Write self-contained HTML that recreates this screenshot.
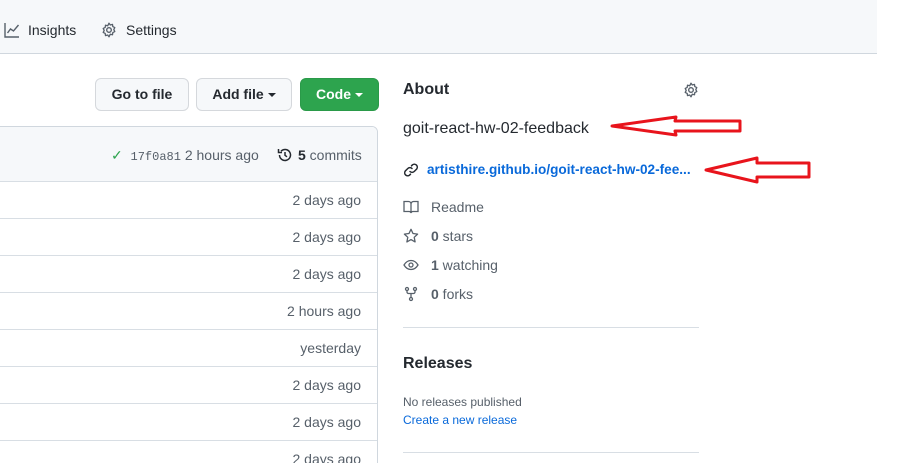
<!DOCTYPE html>
<html><head><meta charset="utf-8"><style>
html,body{margin:0;width:913px;height:463px;overflow:hidden}
body{background:#fff;font-family:"Liberation Sans",sans-serif;color:#24292f;position:relative}
.a{position:absolute;white-space:nowrap}
.hdr{position:absolute;left:0;top:0;width:877px;height:53px;background:#f6f8fa;border-bottom:1px solid #d0d7de}
.btn{position:absolute;top:78px;height:31px;border:1px solid #d5d8dc;border-radius:6px;background:#f6f8fa;font-size:14px;font-weight:bold;line-height:31px;text-align:center;color:#24292f}
.caret{display:inline-block;border-left:4px solid transparent;border-right:4px solid transparent;border-top:4px solid currentColor;vertical-align:middle;margin-left:4px}
.tbl{position:absolute;left:-10px;top:126px;width:386px;height:350px;border:1px solid #d0d7de;border-radius:6px;overflow:hidden}
.row{position:absolute;left:0;width:386px;height:37px;border-top:1px solid #d8dee4}
.row span{position:absolute;right:16px;top:10px;font-size:14px;color:#57606a}
.side{font-size:14px;color:#57606a}
svg{position:absolute}
</style></head><body>
<div class="hdr"></div>
<svg style="left:4px;top:22px" width="16" height="16" viewBox="0 0 16 16"><path d="M1 1v14h14" stroke="#57606a" stroke-width="1.4" fill="none"/><path d="M3.5 11l3-4 3 2 5-6" stroke="#57606a" stroke-width="1.4" fill="none"/></svg>
<div class="a" style="left:28px;top:22px;font-size:14px">Insights</div>
<svg style="left:101px;top:22px" width="16" height="16" viewBox="0 0 16 16"><circle cx="8" cy="8" r="2.3" stroke="#57606a" stroke-width="1.4" fill="none"/><path d="M8 1.2l1.3 1.8 2.2-.6.3 2.2 2 1-1 2 1 2-2 1-.3 2.2-2.2-.6L8 14.8l-1.3-1.8-2.2.6-.3-2.2-2-1 1-2-1-2 2-1 .3-2.2 2.2.6z" stroke="#57606a" stroke-width="1.3" fill="none" stroke-linejoin="round"/></svg>
<div class="a" style="left:126px;top:22px;font-size:14px">Settings</div>

<div class="btn" style="left:95px;width:92px">Go to file</div>
<div class="btn" style="left:196px;width:94px">Add file<span class="caret"></span></div>
<div class="btn" style="left:300px;width:77px;background:#2da44e;border-color:#2a9a49;color:#fff">Code<span class="caret"></span></div>

<div class="tbl">
<div style="position:absolute;left:0;top:0;width:386px;height:54px;background:#f6f8fa"></div>
<div class="a" style="left:120px;top:20px;font-size:14px;color:#57606a"><span style="color:#2da44e">✓</span>&nbsp; <span style="font-family:'Liberation Mono',monospace;font-size:12px">17f0a81</span> 2 hours ago</div>
<svg style="left:286px;top:20px" width="16" height="16" viewBox="0 0 16 16"><path d="M2.5 8A5.5 5.5 0 1 0 4 4.2" stroke="#24292f" stroke-width="1.5" fill="none"/><path d="M1.5 2v3.5H5" stroke="#24292f" stroke-width="1.5" fill="none"/><path d="M8 5v3.3l2 1.5" stroke="#24292f" stroke-width="1.5" fill="none"/></svg>
<div class="a" style="left:307px;top:20px;font-size:14px;color:#57606a"><b style="color:#24292f">5</b> commits</div>
<div class="row" style="top:54px"><span>2 days ago</span></div>
<div class="row" style="top:91px"><span>2 days ago</span></div>
<div class="row" style="top:128px"><span>2 days ago</span></div>
<div class="row" style="top:165px"><span>2 hours ago</span></div>
<div class="row" style="top:202px"><span>yesterday</span></div>
<div class="row" style="top:239px"><span>2 days ago</span></div>
<div class="row" style="top:276px"><span>2 days ago</span></div>
<div class="row" style="top:313px"><span>2 days ago</span></div>
</div>

<div class="a" style="left:403px;top:81px;font-size:16px;font-weight:bold">About</div>
<svg style="left:683px;top:82px" width="16" height="16" viewBox="0 0 16 16"><circle cx="8" cy="8" r="2.3" stroke="#57606a" stroke-width="1.4" fill="none"/><path d="M8 1.2l1.3 1.8 2.2-.6.3 2.2 2 1-1 2 1 2-2 1-.3 2.2-2.2-.6L8 14.8l-1.3-1.8-2.2.6-.3-2.2-2-1 1-2-1-2 2-1 .3-2.2 2.2.6z" stroke="#57606a" stroke-width="1.3" fill="none" stroke-linejoin="round"/></svg>
<div class="a" style="left:403px;top:120px;font-size:16px">goit-react-hw-02-feedback</div>
<svg style="left:403px;top:162px" width="16" height="16" viewBox="0 0 16 16"><path d="M7 9.5a3 3 0 0 0 4.2 0l2.5-2.5a3 3 0 0 0-4.2-4.2L8.5 3.8M9 6.5a3 3 0 0 0-4.2 0L2.3 9a3 3 0 0 0 4.2 4.2l1-1" stroke="#24292f" stroke-width="1.5" fill="none" stroke-linecap="round"/></svg>
<div class="a" style="left:427px;top:162px;font-size:13.6px;font-weight:bold;color:#0969da">artisthire.github.io/goit-react-hw-02-fee...</div>

<svg style="left:403px;top:199px" width="16" height="16" viewBox="0 0 16 16"><path d="M1 2.5h4.5A2.5 2.5 0 0 1 8 5v9a2 2 0 0 0-2-1.5H1zM15 2.5h-4.5A2.5 2.5 0 0 0 8 5v9a2 2 0 0 1 2-1.5h5z" stroke="#57606a" stroke-width="1.3" fill="none"/></svg>
<div class="a side" style="left:431px;top:199px">Readme</div>
<svg style="left:403px;top:228px" width="16" height="16" viewBox="0 0 16 16"><path d="M8 1.3l2 4.2 4.6.6-3.4 3.2.9 4.6L8 11.6l-4.1 2.3.9-4.6L1.4 6.1 6 5.5z" stroke="#57606a" stroke-width="1.3" fill="none" stroke-linejoin="round"/></svg>
<div class="a side" style="left:431px;top:228px"><b style="color:#57606a">0</b> stars</div>
<svg style="left:403px;top:257px" width="16" height="16" viewBox="0 0 16 16"><path d="M1 8c1.8-3 4.2-4.5 7-4.5S13.2 5 15 8c-1.8 3-4.2 4.5-7 4.5S2.8 11 1 8z" stroke="#57606a" stroke-width="1.3" fill="none"/><circle cx="8" cy="8" r="2" stroke="#57606a" stroke-width="1.3" fill="none"/></svg>
<div class="a side" style="left:431px;top:257px"><b style="color:#57606a">1</b> watching</div>
<svg style="left:403px;top:286px" width="16" height="16" viewBox="0 0 16 16"><circle cx="4" cy="3" r="1.5" stroke="#57606a" stroke-width="1.3" fill="none"/><circle cx="12" cy="3" r="1.5" stroke="#57606a" stroke-width="1.3" fill="none"/><circle cx="8" cy="13" r="1.5" stroke="#57606a" stroke-width="1.3" fill="none"/><path d="M4 4.5v1.5a1.5 1.5 0 0 0 1.5 1.5h5A1.5 1.5 0 0 0 12 6V4.5M8 7.5v4" stroke="#57606a" stroke-width="1.3" fill="none"/></svg>
<div class="a side" style="left:431px;top:286px"><b style="color:#57606a">0</b> forks</div>

<div style="position:absolute;left:403px;top:327px;width:296px;border-top:1px solid #d8dee4"></div>
<div class="a" style="left:403px;top:355px;font-size:16px;font-weight:bold">Releases</div>
<div class="a" style="left:403px;top:395px;font-size:12px;color:#57606a">No releases published</div>
<div class="a" style="left:403px;top:413px;font-size:12px;color:#0969da">Create a new release</div>
<div style="position:absolute;left:403px;top:452px;width:296px;border-top:1px solid #d8dee4"></div>

<svg style="left:0;top:0" width="913" height="463"><path d="M612 126 L676 117 L675 121 L740 121 L740 131 L675 131 L676 135 Z" stroke="#e8141c" stroke-width="3" fill="none" stroke-linejoin="round"/><path d="M706 170 L757 158 L757 163 L809 163 L809 177 L757 177 L757 182 Z" stroke="#e8141c" stroke-width="3" fill="none" stroke-linejoin="round"/></svg>
</body></html>
